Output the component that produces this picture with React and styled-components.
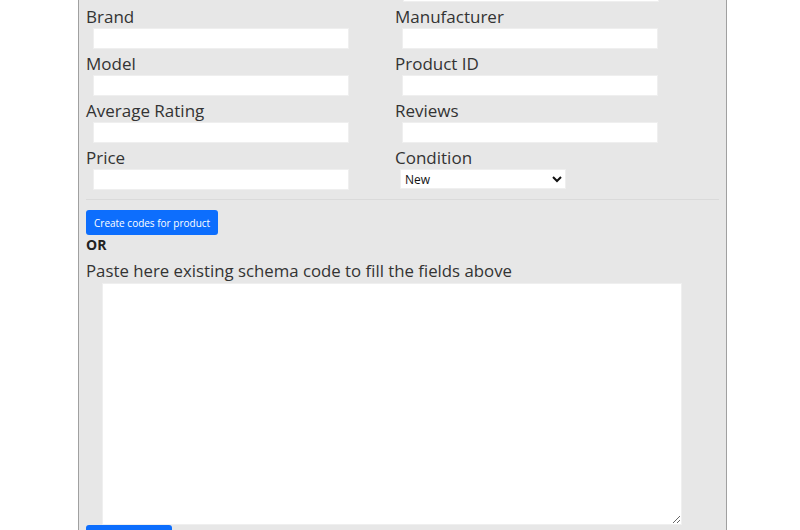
import React from 'react'
import styled, { createGlobalStyle } from 'styled-components'

const GlobalStyle = createGlobalStyle`
  body {
    margin: 0;
    background: #fff;
    font-family: "Open Sans", "Noto Sans", sans-serif;
    color: #212529;
    overflow: hidden;
  }
`;

const Panel = styled.div`
    width: 633px;
    margin: -58px 0 0 78px;
    padding: 0 7px 40px 7px;
    background: #e7e7e7;
    border-left: 1px solid #a0a0a0;
    border-right: 1px solid #a0a0a0;
`;

const Grid = styled.div`
    display: grid;
    grid-template-columns: 309px 309px;
`;

const Field = styled.div`
    display: flex;
    flex-direction: column;
    align-items: flex-start;
    padding-bottom: 1px;
`;

const Label = styled.label`
    font-size: 17px;
    line-height: 27px;
    height: 25px;
    color: #333;
`;

const Input = styled.input`
    box-sizing: border-box;
    width: 256px;
    height: 21px;
    margin-left: 7px;
    border: 1px solid #efefef;
    background: #fff;
    outline: none;
`;

const TallArea = styled.textarea`
    box-sizing: border-box;
    width: 256px;
    height: 60px;
    margin-left: 8px;
    border: 1px solid #efefef;
    background: #fff;
    display: block;
`;

const Select = styled.select`
    box-sizing: border-box;
    width: 166px;
    height: 20px;
    margin-left: 5px;
    font-family: "Open Sans", sans-serif;
    font-size: 12px;
    border: 1px solid #efefef;
    background: #fff;
    color: #111;
`;

const Rule = styled.hr`
    border: none;
    border-top: 1px solid #dadada;
    margin: 8px 0 10px 0;
`;

const Button = styled.button`
    display: block;
    background: #0d6efd;
    color: #fff;
    border: none;
    border-radius: 3px;
    font-family: "Open Sans", sans-serif;
    font-size: 10px;
    height: 25px;
    padding: 0 8px;
    width: ${p => p.$w || 'auto'};
`;

const Or = styled.div`
    font-size: 14px;
    font-weight: 700;
    line-height: 20px;
    color: #222;
`;

const Hint = styled.div`
    font-size: 16.8px;
    line-height: 25px;
    color: #333;
    margin-top: 3px;
`;

const PasteArea = styled.textarea`
    box-sizing: border-box;
    display: block;
    width: 580px;
    height: 242px;
    margin-left: 16px;
    border: 1px solid #efefef;
    background: #fff;
`;

const fields = [
  ['Brand', 'Manufacturer'],
  ['Model', 'Product ID'],
  ['Average Rating', 'Reviews'],
]

const App = () => {
  return (
    <>
      <GlobalStyle />
      <Panel>
        <Grid>
          <Field />
          <Field><TallArea /></Field>
          {fields.flat().map(name => (
            <Field key={name}>
              <Label>{name}</Label>
              <Input />
            </Field>
          ))}
          <Field>
            <Label>Price</Label>
            <Input />
          </Field>
          <Field>
            <Label>Condition</Label>
            <Select defaultValue="new">
              <option value="new">New</option>
              <option value="used">Used</option>
              <option value="refurbished">Refurbished</option>
            </Select>
          </Field>
        </Grid>
        <Rule />
        <Button>Create codes for product</Button>
        <Or>OR</Or>
        <Hint>Paste here existing schema code to fill the fields above</Hint>
        <PasteArea />
        <Button $w="86px">Fill fields</Button>
      </Panel>
    </>
  )
}

export default App
